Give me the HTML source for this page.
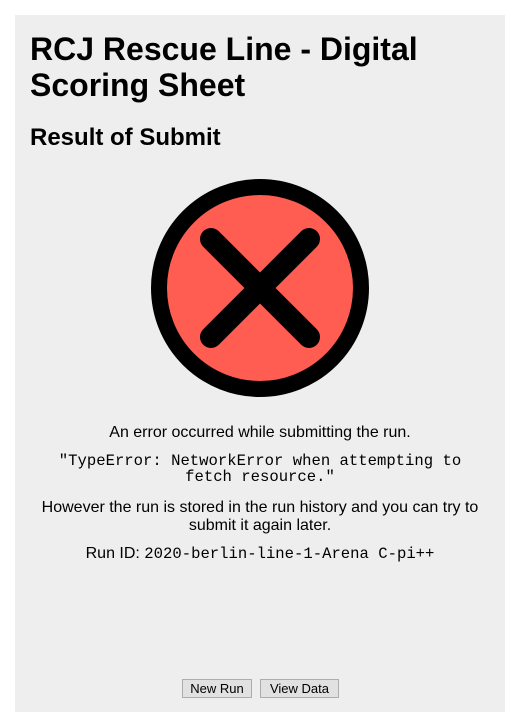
<!DOCTYPE html>
<html><head><style>
body{margin:0;background:#fff;width:520px;height:728px;font-family:"Liberation Sans",sans-serif;}
.c{position:absolute;left:15px;top:15px;width:490px;height:697px;background:#eeeeee;}
h1{position:absolute;left:15px;top:16px;margin:0;font-size:32px;line-height:36px;font-weight:bold;}
h2{position:absolute;left:15px;top:109px;margin:0;font-size:24px;line-height:28px;font-weight:bold;}
.t{position:absolute;left:0;width:490px;text-align:center;font-size:16px;line-height:18px;color:#000;}
.m{font-family:"Liberation Mono",monospace;font-size:15.6px;line-height:16px;}
.b{position:absolute;top:664px;height:19px;background:#e1e1e1;border:1px solid #adadad;box-sizing:border-box;font-size:13px;line-height:17px;text-align:center;}
</style></head><body>
<div class="c">
<h1>RCJ Rescue Line - Digital<br>Scoring Sheet</h1>
<h2>Result of Submit</h2>
<svg style="position:absolute;left:125px;top:155px" width="240" height="240" viewBox="0 0 240 240">
<circle cx="120" cy="118" r="101" fill="#ff5c52" stroke="#000" stroke-width="16"/>
<path d="M71 69L169 167M169 69L71 167" stroke="#000" stroke-width="22" stroke-linecap="round"/>
</svg>
<div class="t" style="top:409px">An error occurred while submitting the run.</div>
<div class="t m" style="top:438px">"TypeError: NetworkError when attempting to<br>fetch resource."</div>
<div class="t" style="top:484px">However the run is stored in the run history and you can try to<br>submit it again later.</div>
<div class="t" style="top:530px">Run ID: <span class="m">2020-berlin-line-1-Arena C-pi++</span></div>
<div class="b" style="left:167px;width:70px">New Run</div>
<div class="b" style="left:245px;width:79px">View Data</div>
</div>
</body></html>
